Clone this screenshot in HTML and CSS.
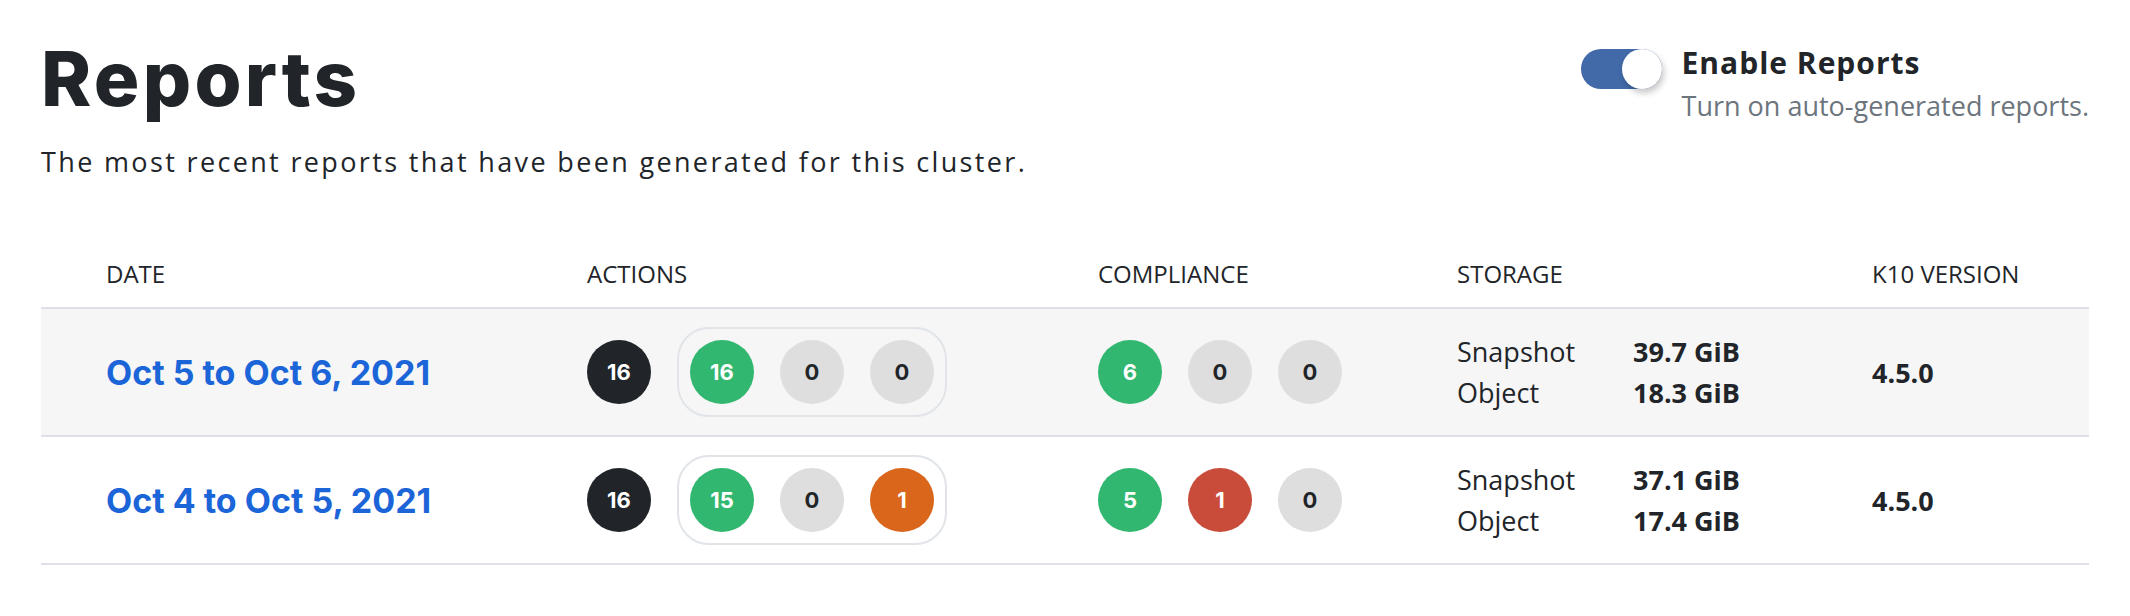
FILE: index.html
```html
<!DOCTYPE html>
<html lang="en">
<head>
    <meta charset="UTF-8">
    <meta name="viewport" content="width=device-width, initial-scale=1.0">
    <title>Reports</title>
    <link rel="stylesheet" href="styles.css">
</head>
<body>
    <div class="page">
        <div class="top">
            <div>
                <h1 class="title">Reports</h1>
                <p class="lead">The most recent reports that have been generated for this cluster.</p>
            </div>
            <div class="enable">
                <span class="switch"><span class="knob"></span></span>
                <div>
                    <div class="enable-label">Enable Reports</div>
                    <div class="enable-help">Turn on auto-generated reports.</div>
                </div>
            </div>
        </div>

        <div class="table">
            <div class="row head">
                <div>DATE</div>
                <div>ACTIONS</div>
                <div>COMPLIANCE</div>
                <div>STORAGE</div>
                <div>K10 VERSION</div>
            </div>
            <div class="row shaded">
                <div><a class="date" href="#">Oct 5 to Oct 6, 2021</a></div>
                <div class="actions">
                    <span class="dot dark">16</span>
                    <span class="group">
                        <span class="dot green">16</span>
                        <span class="dot grey">0</span>
                        <span class="dot grey">0</span>
                    </span>
                </div>
                <div class="dots">
                    <span class="dot green">6</span>
                    <span class="dot grey">0</span>
                    <span class="dot grey">0</span>
                </div>
                <div class="storage">
                    <span>Snapshot</span><b>39.7 GiB</b>
                    <span>Object</span><b>18.3 GiB</b>
                </div>
                <div class="version">4.5.0</div>
            </div>
            <div class="row">
                <div><a class="date" href="#">Oct 4 to Oct 5, 2021</a></div>
                <div class="actions">
                    <span class="dot dark">16</span>
                    <span class="group">
                        <span class="dot green">15</span>
                        <span class="dot grey">0</span>
                        <span class="dot orange">1</span>
                    </span>
                </div>
                <div class="dots">
                    <span class="dot green">5</span>
                    <span class="dot red">1</span>
                    <span class="dot grey">0</span>
                </div>
                <div class="storage">
                    <span>Snapshot</span><b>37.1 GiB</b>
                    <span>Object</span><b>17.4 GiB</b>
                </div>
                <div class="version">4.5.0</div>
            </div>
        </div>
    </div>
</body>
</html>
```

FILE: styles.css
```css
body {
    margin: 0;
    font-family: "Open Sans", "Liberation Sans", sans-serif;
    color: #212529;
    background: #fff;
}
.page {
    padding: 0 41px;
}
.top {
    display: flex;
    justify-content: space-between;
    align-items: flex-start;
}
.title {
    font-family: Inter, Roboto, sans-serif;
    font-weight: 800;
    font-size: 76px;
    line-height: 92px;
    margin: 32px 0 0 0;
    letter-spacing: 3.3px;
}
.lead {
    font-size: 27px;
    line-height: 40px;
    letter-spacing: 2.35px;
    margin: 18px 0 0 0;
}
.enable {
    display: flex;
    gap: 20px;
    margin-top: 46px;
}
.switch {
    display: block;
    width: 81px;
    height: 40px;
    margin-top: 3px;
    border-radius: 20px;
    background: #426aa8;
    position: relative;
}
.knob {
    position: absolute;
    right: 0;
    top: 0;
    width: 40px;
    height: 40px;
    border-radius: 50%;
    background: #fff;
    box-shadow: 2px 4px 6px rgba(0, 0, 0, 0.22);
}
.enable-label {
    font-weight: 700;
    font-size: 30px;
    line-height: 34px;
    letter-spacing: 1px;
}
.enable-help {
    font-size: 27px;
    line-height: 40px;
    margin-top: 6px;
    color: #6c757d;
}

.table {
    margin-top: 76px;
}
.row {
    display: grid;
    grid-template-columns: 481px 511px 359px 415px 1fr;
    align-items: center;
    padding-left: 65px;
    height: 126px;
    border-bottom: 2px solid #dee2e6;
}
.row.head {
    height: auto;
    padding-bottom: 17px;
    font-size: 24px;
    line-height: 32px;
}
.shaded {
    background: #f6f6f6;
}
.date {
    font-family: Inter, Roboto, sans-serif;
    font-weight: 700;
    font-size: 34px;
    color: #1b65d8;
    text-decoration: none;
}
.actions, .dots, .group {
    display: flex;
    align-items: center;
    gap: 26px;
}
.group {
    padding: 11px;
    border: 2px solid #e1e4e8;
    border-radius: 32px;
}
.dot {
    width: 64px;
    height: 64px;
    border-radius: 50%;
    display: flex;
    align-items: center;
    justify-content: center;
    font-family: Inter, Roboto, sans-serif;
    font-weight: 700;
    font-size: 22px;
    color: #212529;
}
.dark { background: #212529; color: #fff; }
.green { background: #32b771; color: #fff; }
.grey { background: #dedede; }
.orange { background: #d9661b; color: #fff; }
.red { background: #c94c3a; color: #fff; }
.storage {
    display: grid;
    grid-template-columns: 176px auto;
    font-size: 27px;
    line-height: 41px;
}
.storage b {
    font-weight: 700;
}
.version {
    font-weight: 700;
    font-size: 27px;
}
```
